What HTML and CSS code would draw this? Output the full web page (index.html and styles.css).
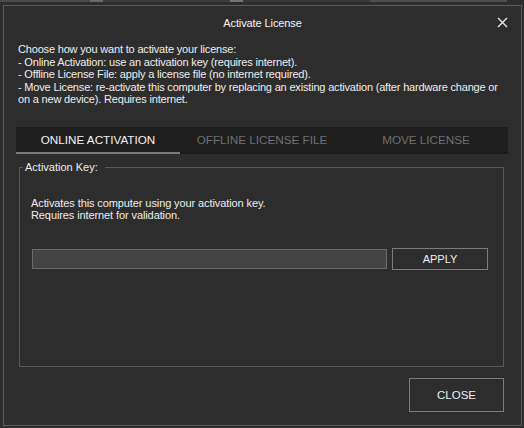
FILE: index.html
```html
<!DOCTYPE html>
<html lang="en">
<head>
<meta charset="utf-8">
<title>Activate License</title>
<link rel="stylesheet" href="styles.css">
</head>
<body>
<div class="backdrop">
  <span class="seg seg-a"></span><span class="seg seg-b"></span><span class="seg seg-c"></span><span class="seg seg-d"></span><span class="seg seg-e"></span><span class="seg seg-f"></span><span class="seg seg-g"></span>
</div>
<div class="window">
  <div class="titlebar">
    <span class="title">Activate License</span>
    <button class="x-btn" aria-label="Close">
      <svg width="11" height="11" viewBox="0 0 11 11"><path d="M1 1 L10 10 M10 1 L1 10" stroke="#e8e8e8" stroke-width="1.4" fill="none"/></svg>
    </button>
  </div>
  <div class="body">
    <p class="intro">Choose how you want to activate your license:<br>- Online Activation: use an activation key (requires internet).<br>- Offline License File: apply a license file (no internet required).<br>- Move License: re-activate this computer by replacing an existing activation (after hardware change or<br>on a new device). Requires internet.</p>
    <div class="tabs">
      <div class="tab active">ONLINE ACTIVATION</div>
      <div class="tab">OFFLINE LICENSE FILE</div>
      <div class="tab">MOVE LICENSE</div>
    </div>
    <fieldset class="group">
      <legend class="legend">Activation Key:</legend>
      <p class="desc">Activates this computer using your activation key.<br>Requires internet for validation.</p>
      <div class="key-row">
        <input class="key-input" type="text">
        <button class="btn apply">APPLY</button>
      </div>
    </fieldset>
    <div class="footer">
      <button class="btn close">CLOSE</button>
    </div>
  </div>
</div>
</body>
</html>
```
FILE: styles.css
```css
* { box-sizing: border-box; }
html, body { margin: 0; padding: 0; }
body {
  width: 524px;
  height: 428px;
  background: #2d2d2d;
  font-family: "Liberation Sans", Arial, sans-serif;
  font-size: 11px;
  color: #ececec;
  overflow: hidden;
}
.backdrop {
  display: flex;
  height: 5px;
  align-items: flex-start;
}
.seg { display: block; height: 2px; }
.seg-a { width: 90px; background: #4a4a4a; }
.seg-b { width: 13px; background: #6a6a6a; }
.seg-c { width: 127px; background: #3c3c3c; }
.seg-d { width: 13px; background: #747474; }
.seg-e { width: 127px; background: #383838; }
.seg-f { width: 137px; background: #4e4e4e; }
.seg-g { flex: 1; background: #2d2d2d; }

.window {
  margin: 0 2px 0 3px;
  height: 421px;
  border: 1px solid #5c5c5c;
  background: #2d2d2d;
}
.titlebar {
  position: relative;
  height: 32px;
  display: flex;
  align-items: center;
  justify-content: center;
}
.title {
  font-size: 11px;
  color: #f4f4f4;
  margin-top: 1px;
  letter-spacing: -0.1px;
}
.x-btn {
  position: absolute;
  right: 13px;
  top: 11px;
  width: 11px;
  height: 11px;
  padding: 0;
  border: 0;
  background: transparent;
  display: flex;
}
.body {
  padding: 0 13px 0 12px;
}
.intro {
  margin: 5px 0 0 2px;
  line-height: 12.5px;
  white-space: nowrap;
  letter-spacing: -0.18px;
  color: #eeeeee;
}
.tabs {
  margin-top: 21.5px;
  display: flex;
  background: #1e1e1e;
  height: 27px;
}
.tab {
  flex: 1;
  text-align: center;
  line-height: 25px;
  font-size: 11.7px;
  color: #707070;
  border-bottom: 2px solid #1b1b1b;
}
.tab.active {
  color: #f4f4f4;
  border-bottom-color: #7a7a7a;
}
.group {
  margin: 6px 4px 0 3px;
  height: 207px;
  border: 1px solid #5a5a5a;
  padding: 0 15px 0 12px;
  min-width: 0;
}
.legend {
  margin-left: -9px;
  padding: 0 7px 0 2px;
  line-height: 14px;
  font-size: 11px;
  color: #ececec;
}
.desc {
  margin: 23px 0 0 -1px;
  line-height: 12px;
  letter-spacing: -0.1px;
  color: #eeeeee;
}
.key-row {
  display: flex;
  align-items: center;
  gap: 5px;
  margin-top: 27px;
}
.key-input {
  flex: 1;
  min-width: 0;
  height: 20px;
  background: #444444;
  border: 1px solid #6a6a6a;
  outline: none;
  padding: 0 4px;
  color: #eee;
  font: inherit;
}
.btn {
  background: #2d2d2d;
  border: 1px solid #7c7c7c;
  color: #eeeeee;
  font-family: "Liberation Sans", Arial, sans-serif;
  font-size: 11px;
  padding: 0;
}
.apply {
  width: 96px;
  height: 22px;
}
.footer {
  display: flex;
  justify-content: flex-end;
  margin: 11px 4px 0 0;
}
.close {
  width: 95px;
  height: 34px;
  font-size: 11.5px;
}
```
